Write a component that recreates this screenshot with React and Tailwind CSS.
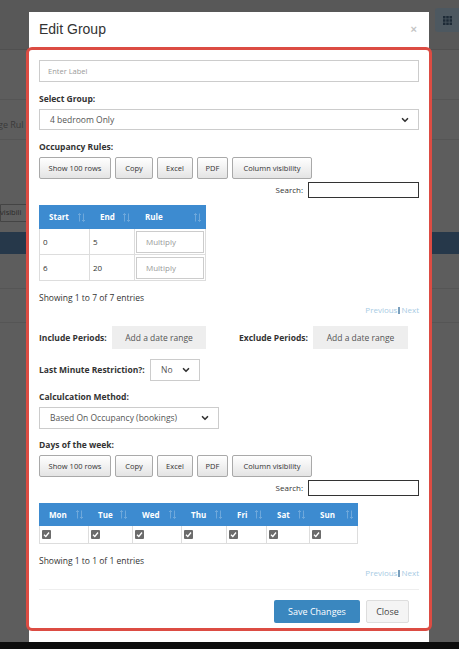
import { ChevronDown } from "lucide-react";

const font = "font-['Open_Sans',sans-serif]";

const SortIcon = () => (
  <svg width="7" height="9" viewBox="0 0 7 9" className="opacity-25">
    <path d="M1.5 0.5 L1.5 8.5 M0 2 L1.5 0.5 L3 2" stroke="#fff" strokeWidth="1" fill="none" />
    <path d="M5.5 0.5 L5.5 8.5 M4 7 L5.5 8.5 L7 7" stroke="#fff" strokeWidth="1" fill="none" />
  </svg>
);

const Check = () => (
  <span className="inline-flex h-[9px] w-[9px] items-center justify-center rounded-[1px] bg-[#6b6b6b]">
    <svg width="7" height="7" viewBox="0 0 7 7">
      <path d="M1 3.8 L2.8 5.5 L6 1.5" stroke="#fff" strokeWidth="1.3" fill="none" />
    </svg>
  </span>
);

const Label = ({ children, className = "" }) => (
  <div className={`text-[8.5px] leading-[10px] font-bold text-[#333] ${className}`}>{children}</div>
);

const ToolButtons = () => (
  <div className="flex gap-[4px]">
    {[
      ["Show 100 rows", "w-[72px]"],
      ["Copy", "w-[38px]"],
      ["Excel", "w-[36px]"],
      ["PDF", "w-[31px]"],
      ["Column visibility", "w-[80px]"],
    ].map(([t, w]) => (
      <button
        key={t}
        className={`${w} h-[22px] rounded-[2px] border border-[#a9a9a9] bg-gradient-to-b from-white to-[#e4e4e4] text-[7.5px] leading-[10px] text-[#333]`}
      >
        {t}
      </button>
    ))}
  </div>
);

const SearchRow = () => (
  <div className="mt-[3px] flex h-[16px] items-center justify-end gap-[5px]">
    <span className="text-[8px] leading-[10px] text-[#333]">Search:</span>
    <div className="h-[16px] w-[111px] border border-[#333] bg-white" />
  </div>
);

const Pager = ({ info }) => (
  <div>
    <div className="text-[8.5px] leading-[10px] text-[#333]">{info}</div>
    <div className="mt-[2px] flex h-[10px] items-center justify-end text-[8px] leading-[10px] text-[#a8cbe4]">
      Previous
      <span className="mx-[1px] inline-block h-[7px] w-[2px] bg-[#7a9fbd]" />
      Next
    </div>
  </div>
);

const SelectBox = ({ text, className = "" }) => (
  <div className={`flex items-center justify-between border border-[#ccc] bg-white pl-[10px] pr-[8px] text-[8.5px] leading-[10px] text-[#555] ${className}`}>
    <span>{text}</span>
    <ChevronDown size={10} strokeWidth={4} color="#333" />
  </div>
);

export default function App() {
  const days = [
    ["Mon", "w-[49px]"],
    ["Tue", "w-[44px]"],
    ["Wed", "w-[49px]"],
    ["Thu", "w-[46px]"],
    ["Fri", "w-[40px]"],
    ["Sat", "w-[43px]"],
    ["Sun", "w-[48px]"],
  ];

  return (
    <div className={`relative h-[649px] w-[459px] overflow-hidden bg-[#5d5d5d] ${font}`}>
      {/* dimmed page behind the modal */}
      <div className="flex h-[50px] items-start justify-end border-b border-[#505050] bg-[#585858] pt-[8px]">
        <div className="flex h-[24px] w-[24px] items-center justify-center rounded-l-[3px] bg-[#4d5860]">
          <svg width="9" height="9" viewBox="0 0 9 9" fill="#1d2a36">
            <rect x="0" y="0" width="2.5" height="2.5" />
            <rect x="3.25" y="0" width="2.5" height="2.5" />
            <rect x="6.5" y="0" width="2.5" height="2.5" />
            <rect x="0" y="3.25" width="2.5" height="2.5" />
            <rect x="3.25" y="3.25" width="2.5" height="2.5" />
            <rect x="6.5" y="3.25" width="2.5" height="2.5" />
            <rect x="0" y="6.5" width="2.5" height="2.5" />
            <rect x="3.25" y="6.5" width="2.5" height="2.5" />
            <rect x="6.5" y="6.5" width="2.5" height="2.5" />
          </svg>
        </div>
      </div>
      <div className="h-[50px] border-b border-[#555]" />
      <div className="flex h-[40px] items-end border-b border-[#555] pb-[8px] text-[9px] leading-[12px] text-[#3a3a3a]">
        <span className="-ml-[2px]">ge Rul</span>
      </div>
      <div className="flex h-[92px] items-end pb-[10px]">
        <div className="flex h-[18px] w-[36px] items-center rounded-r-[2px] border border-[#444] bg-[#5f5f5f] text-[7.5px] text-[#2a2a2a]">
          <span className="-ml-[1px]">visibili</span>
        </div>
      </div>
      <div className="h-[22px] bg-[#26384a]" />
      <div className="h-[35px] border-b border-[#555]" />
      <div className="h-[34px] border-b border-[#555]" />
      <div className="absolute bottom-0 left-0 right-0 h-[7px] bg-[#0d0d0d]" />

      {/* modal */}
      <div className="absolute left-[29px] top-[12px] h-[630px] w-[400px] bg-white">
        <div className="flex h-[35px] items-center justify-between pl-[10px] pr-[12px]">
          <span className="font-['Liberation_Sans',sans-serif] text-[14px] text-[#333]">Edit Group</span>
          <span className="font-['Liberation_Sans',sans-serif] text-[11px] font-bold text-[#c4c4c4]">×</span>
        </div>

        <div className="-mx-[3px] rounded-[6px] border-[3px] border-[#dc4c43] px-[10px] pb-[5px] pt-[10px]">
          <div className="flex h-[22px] items-center border border-[#ccc] pl-[8px] text-[7.5px] leading-[10px] text-[#9a9a9a]">
            Enter Label
          </div>

          <Label className="mt-[12px]">Select Group:</Label>
          <SelectBox text="4 bedroom Only" className="mt-[5px] h-[21px]" />

          <Label className="mt-[12px]">Occupancy Rules:</Label>
          <div className="mt-[5px]">
            <ToolButtons />
          </div>
          <SearchRow />

          <div className="mt-[7px] w-[167px] text-[8px] leading-[10px]">
            <div className="flex h-[24px] bg-[#3d8bd0] font-bold text-white">
              <div className="flex w-[51px] items-center justify-between pl-[10px] pr-[5px]">Start<SortIcon /></div>
              <div className="flex w-[45px] items-center justify-between pl-[10px] pr-[5px]">End<SortIcon /></div>
              <div className="flex w-[71px] items-center justify-between pl-[10px] pr-[5px]">Rule<SortIcon /></div>
            </div>
            {[["0", "5"], ["6", "20"]].map(([a, b]) => (
              <div key={a} className="flex h-[26px] border-b border-[#ddd] text-[#333]">
                <div className="flex w-[51px] items-center border-l border-r border-[#ddd] pl-[3px]">{a}</div>
                <div className="flex w-[45px] items-center border-r border-[#ddd] pl-[3px]">{b}</div>
                <div className="flex w-[71px] items-center border-r border-[#ddd] p-[1px]">
                  <div className="flex h-[22px] w-full items-center border border-[#ccc] pl-[9px] text-[#999]">Multiply</div>
                </div>
              </div>
            ))}
          </div>

          <div className="mt-[12px]">
            <Pager info="Showing 1 to 7 of 7 entries" />
          </div>

          <div className="mt-[11px] flex h-[23px] items-center">
            <Label className="w-[73px]">Include Periods:</Label>
            <button className="h-[23px] w-[94px] bg-[#eee] text-[8.5px] leading-[10px] text-[#555]">Add a date range</button>
            <Label className="ml-[33px] w-[74px]">Exclude Periods:</Label>
            <button className="h-[23px] w-[95px] bg-[#eee] text-[8.5px] leading-[10px] text-[#555]">Add a date range</button>
          </div>

          <div className="mt-[10px] flex items-center">
            <Label className="w-[111px]">Last Minute Restriction?:</Label>
            <SelectBox text="No" className="h-[22px] w-[50px]" />
          </div>

          <Label className="mt-[11px]">Calculcation Method:</Label>
          <SelectBox text="Based On Occupancy (bookings)" className="mt-[5px] h-[22px] w-[180px]" />

          <Label className="mt-[11px]">Days of the week:</Label>
          <div className="mt-[5px]">
            <ToolButtons />
          </div>
          <SearchRow />

          <div className="mt-[7px] w-[319px] text-[8px] leading-[10px]">
            <div className="flex h-[23px] bg-[#3d8bd0] font-bold text-white">
              {days.map(([d, w]) => (
                <div key={d} className={`${w} flex items-center justify-between pl-[10px] pr-[5px]`}>
                  {d}
                  <SortIcon />
                </div>
              ))}
            </div>
            <div className="flex h-[18px] border-b border-l border-[#ddd]">
              {days.map(([d, w]) => (
                <div key={d} className={`${w} flex items-center border-r border-[#ddd] pl-[2px]`}>
                  <Check />
                </div>
              ))}
            </div>
          </div>

          <div className="mt-[12px]">
            <Pager info="Showing 1 to 1 of 1 entries" />
          </div>

          <div className="mt-[11px] border-t border-[#eee]" />

          <div className="flex justify-end gap-[6px] pr-[10px] pt-[10px]">
            <button className="h-[23px] w-[86px] rounded-[2px] bg-[#3a87bf] text-[9px] leading-[10px] text-white">Save Changes</button>
            <button className="h-[23px] w-[43px] rounded-[2px] border border-[#ddd] bg-[#f4f4f4] text-[9px] leading-[10px] text-[#444]">Close</button>
          </div>
        </div>
      </div>
    </div>
  );
}
